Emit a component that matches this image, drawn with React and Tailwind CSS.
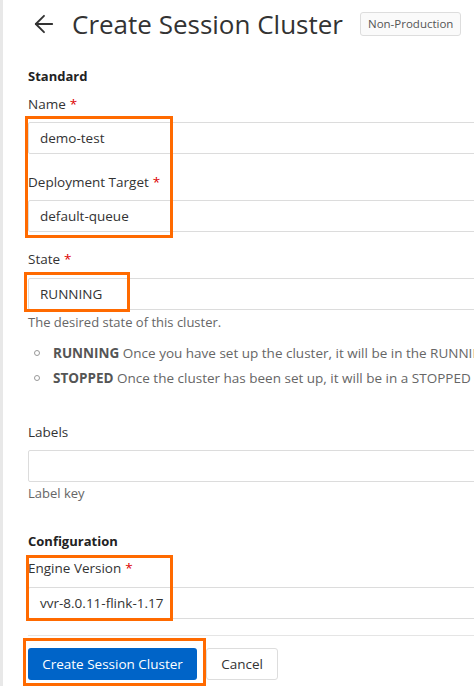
import { ArrowLeft } from 'lucide-react'

const font = { fontFamily: '"Open Sans", "Noto Sans", sans-serif' }

function Label({ children, required, className = '' }) {
  return (
    <div className={`text-[13.5px] leading-[20px] text-[#333] ${className}`}>
      {children}
      {required && <span className="ml-1 text-[#d00]">*</span>}
    </div>
  )
}

function Field({ value, className = '' }) {
  return (
    <div className={`flex h-[32px] w-[520px] items-center rounded-[2px] border border-[#dcdcdc] bg-white px-[11px] text-[13.5px] text-[#333] ${className}`}>
      {value}
    </div>
  )
}

function Bullet({ title, children }) {
  return (
    <li className="flex items-center gap-[13px] whitespace-nowrap">
      <span className="h-[6px] w-[6px] shrink-0 rounded-full border border-[#999]" />
      <span>
        <b className="font-bold text-[#555]">{title}</b> {children}
      </span>
    </li>
  )
}

function Mark({ className }) {
  return <div className={`pointer-events-none absolute border-[3px] border-[#ff6a00] ${className}`} />
}

export default function App() {
  return (
    <div className="relative flex h-[686px] w-[474px] overflow-hidden bg-white" style={font}>
      <div className="w-[3px] shrink-0 bg-[#e8e8e8]" />
      <div className="pl-[25px]">
        <div className="flex h-[48px] items-center">
          <ArrowLeft className="ml-[2px] h-[28px] w-[28px] text-[#333]" strokeWidth={1.6} />
          <h1 className="ml-[14px] whitespace-nowrap text-[26px] font-normal leading-none text-[#333]">Create Session Cluster</h1>
          <span className="ml-[17px] whitespace-nowrap rounded-[3px] border border-[#ddd] bg-[#fafafa] px-[7px] py-[2px] text-[11.5px] text-[#555]">Non-Production</span>
        </div>

        <div className="mt-[18px] text-[13px] font-bold leading-[20px] text-[#222]">Standard</div>
        <Label required className="mt-[8px]">Name</Label>
        <Field value="demo-test" className="mt-[8px]" />
        <Label required className="mt-[18px]">Deployment Target</Label>
        <Field value="default-queue" className="mt-[8px]" />
        <Label required className="mt-[17px]">State</Label>
        <Field value="RUNNING" className="mt-[9px]" />
        <div className="mt-[3px] text-[13px] leading-[18px] text-[#666]">The desired state of this cluster.</div>
        <ul className="mt-[13px] flex flex-col gap-[7px] pl-[6px] text-[13.5px] leading-[18px] text-[#666]">
          <Bullet title="RUNNING">Once you have set up the cluster, it will be in the RUNNING state.</Bullet>
          <Bullet title="STOPPED">Once the cluster has been set up, it will be in a STOPPED state.</Bullet>
        </ul>

        <Label className="mt-[35px]">Labels</Label>
        <Field value="" className="mt-[8px]" />
        <div className="mt-[1px] text-[13px] leading-[20px] text-[#666]">Label key</div>

        <div className="mt-[28px] text-[13px] font-bold leading-[20px] text-[#222]">Configuration</div>
        <Label required className="mt-[7px]">Engine Version</Label>
        <Field value="vvr-8.0.11-flink-1.17" className="mt-[9px]" />
        <div className="mt-[16px] h-px w-[520px] bg-[#e5e5e5]" />
        <div className="mt-[12px] flex gap-[9px]">
          <button className="h-[32px] w-[169px] rounded-[3px] bg-[#0064c8] text-[13.5px] text-white">Create Session Cluster</button>
          <button className="h-[32px] w-[72px] rounded-[3px] border border-[#ddd] bg-white text-[13.5px] text-[#333]">Cancel</button>
        </div>
      </div>

      <Mark className="left-[25px] top-[116px] h-[122px] w-[148px]" />
      <Mark className="left-[24px] top-[272px] h-[40px] w-[106px]" />
      <Mark className="left-[26px] top-[555px] h-[66px] w-[147px]" />
      <Mark className="left-[23px] top-[638px] h-[48px] w-[183px]" />
    </div>
  )
}
